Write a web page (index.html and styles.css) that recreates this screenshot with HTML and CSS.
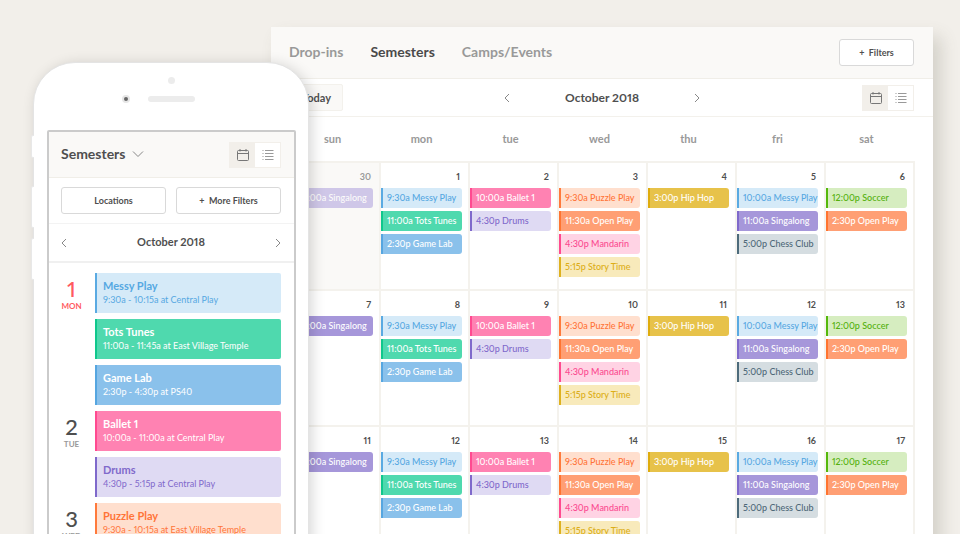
FILE: index.html
```html
<!DOCTYPE html>
<html lang="en">
<head>
  <meta charset="UTF-8" />
  <meta name="viewport" content="width=device-width, initial-scale=1" />
  <title>Semesters</title>
  <link rel="stylesheet" href="styles.css">
</head>
<body>
  <!-- Shared icons -->
  <svg class="sprite" aria-hidden="true">
    <symbol id="icon-calendar" viewBox="0 0 14 14">
      <rect x="1.5" y="2.5" width="11" height="10" rx="1" />
      <path d="M1.5 5.5h11M4 1v2.5M10 1v2.5" />
    </symbol>
    <symbol id="icon-list" viewBox="0 0 14 14">
      <path d="M4 2.5h8.500M4 5.500h8.500M4 8.500h8.500M4 11.500h8.500M1.500 2.500h1M1.500 5.500h1M1.500 8.500h1M1.500 11.500h1" />
    </symbol>
    <symbol id="icon-prev" viewBox="0 0 6 10"><path d="M5 1L1 5l4 4" /></symbol>
    <symbol id="icon-next" viewBox="0 0 6 10"><path d="M1 1l4 4-4 4" /></symbol>
    <symbol id="icon-down" viewBox="0 0 12 8"><path d="M1 1.500l5 5 5-5" /></symbol>
  </svg>

  <!-- Desktop calendar -->
  <main class="desktop">
    <header class="desktop-header">
      <nav class="tabs">
        <a href="#">Drop-ins</a>
        <a href="#" class="active">Semesters</a>
        <a href="#">Camps/Events</a>
      </nav>
      <button type="button" class="btn">+&nbsp; Filters</button>
    </header>

    <div class="toolbar">
      <button type="button" class="today">Today</button>
      <div class="month">
        <button type="button" class="arrow" aria-label="Previous month"><svg><use href="#icon-prev" /></svg></button>
        <h2>October 2018</h2>
        <button type="button" class="arrow" aria-label="Next month"><svg><use href="#icon-next" /></svg></button>
      </div>
      <div class="toggle">
        <button type="button" class="on" aria-label="Calendar view"><svg><use href="#icon-calendar" /></svg></button>
        <button type="button" aria-label="List view"><svg><use href="#icon-list" /></svg></button>
      </div>
    </div>

    <table class="calendar">
      <thead>
        <tr><th>sun</th><th>mon</th><th>tue</th><th>wed</th><th>thu</th><th>fri</th><th>sat</th></tr>
      </thead>
      <tbody>
        <tr class="first-week">
          <td class="past">
            <div class="date">30</div>
            <div class="event violet">10:00a Singalong</div>
          </td>
          <td>
            <div class="date">1</div>
            <div class="event sky">9:30a Messy Play</div>
            <div class="event green">11:00a Tots Tunes</div>
            <div class="event blue">2:30p Game Lab</div>
          </td>
          <td>
            <div class="date">2</div>
            <div class="event pink">10:00a Ballet 1</div>
            <div class="event lilac">4:30p Drums</div>
          </td>
          <td>
            <div class="date">3</div>
            <div class="event peach">9:30a Puzzle Play</div>
            <div class="event orange">11:30a Open Play</div>
            <div class="event rose">4:30p Mandarin</div>
            <div class="event cream">5:15p Story Time</div>
          </td>
          <td>
            <div class="date">4</div>
            <div class="event gold">3:00p Hip Hop</div>
          </td>
          <td>
            <div class="date">5</div>
            <div class="event sky">10:00a Messy Play</div>
            <div class="event violet">11:00a Singalong</div>
            <div class="event slate">5:00p Chess Club</div>
          </td>
          <td>
            <div class="date">6</div>
            <div class="event lime">12:00p Soccer</div>
            <div class="event orange">2:30p Open Play</div>
          </td>
        </tr>
        <tr>
          <td>
            <div class="date">7</div>
            <div class="event violet">10:00a Singalong</div>
          </td>
          <td>
            <div class="date">8</div>
            <div class="event sky">9:30a Messy Play</div>
            <div class="event green">11:00a Tots Tunes</div>
            <div class="event blue">2:30p Game Lab</div>
          </td>
          <td>
            <div class="date">9</div>
            <div class="event pink">10:00a Ballet 1</div>
            <div class="event lilac">4:30p Drums</div>
          </td>
          <td>
            <div class="date">10</div>
            <div class="event peach">9:30a Puzzle Play</div>
            <div class="event orange">11:30a Open Play</div>
            <div class="event rose">4:30p Mandarin</div>
            <div class="event cream">5:15p Story Time</div>
          </td>
          <td>
            <div class="date">11</div>
            <div class="event gold">3:00p Hip Hop</div>
          </td>
          <td>
            <div class="date">12</div>
            <div class="event sky">10:00a Messy Play</div>
            <div class="event violet">11:00a Singalong</div>
            <div class="event slate">5:00p Chess Club</div>
          </td>
          <td>
            <div class="date">13</div>
            <div class="event lime">12:00p Soccer</div>
            <div class="event orange">2:30p Open Play</div>
          </td>
        </tr>
        <tr>
          <td>
            <div class="date">11</div>
            <div class="event violet">10:00a Singalong</div>
          </td>
          <td>
            <div class="date">12</div>
            <div class="event sky">9:30a Messy Play</div>
            <div class="event green">11:00a Tots Tunes</div>
            <div class="event blue">2:30p Game Lab</div>
          </td>
          <td>
            <div class="date">13</div>
            <div class="event pink">10:00a Ballet 1</div>
            <div class="event lilac">4:30p Drums</div>
          </td>
          <td>
            <div class="date">14</div>
            <div class="event peach">9:30a Puzzle Play</div>
            <div class="event orange">11:30a Open Play</div>
            <div class="event rose">4:30p Mandarin</div>
            <div class="event cream">5:15p Story Time</div>
          </td>
          <td>
            <div class="date">15</div>
            <div class="event gold">3:00p Hip Hop</div>
          </td>
          <td>
            <div class="date">16</div>
            <div class="event sky">10:00a Messy Play</div>
            <div class="event violet">11:00a Singalong</div>
            <div class="event slate">5:00p Chess Club</div>
          </td>
          <td>
            <div class="date">17</div>
            <div class="event lime">12:00p Soccer</div>
            <div class="event orange">2:30p Open Play</div>
          </td>
        </tr>
      </tbody>
    </table>
  </main>

  <!-- Phone, lies over the desktop calendar -->
  <section class="phone">
    <span class="side-key mute"></span>
    <span class="side-key vol-up"></span>
    <span class="side-key vol-down"></span>
    <div class="phone-top">
      <span class="sensor"></span>
      <div class="speaker-row">
        <span class="camera"></span>
        <span class="speaker"></span>
      </div>
    </div>

    <div class="screen">
      <header class="screen-header">
        <button type="button" class="title">Semesters <svg><use href="#icon-down" /></svg></button>
        <div class="toggle">
          <button type="button" class="on" aria-label="Calendar view"><svg><use href="#icon-calendar" /></svg></button>
          <button type="button" aria-label="List view"><svg><use href="#icon-list" /></svg></button>
        </div>
      </header>
      <div class="filters">
        <button type="button" class="btn">Locations</button>
        <button type="button" class="btn">+&nbsp; More Filters</button>
      </div>
      <div class="screen-month">
        <button type="button" class="arrow" aria-label="Previous month"><svg><use href="#icon-prev" /></svg></button>
        <h2>October 2018</h2>
        <button type="button" class="arrow" aria-label="Next month"><svg><use href="#icon-next" /></svg></button>
      </div>

      <div class="agenda">
        <div class="day today-day">
          <div class="day-label"><b>1</b><span>MON</span></div>
          <div class="day-events">
            <div class="card sky"><h3>Messy Play</h3><p>9:30a - 10:15a at Central Play</p></div>
            <div class="card green"><h3>Tots Tunes</h3><p>11:00a - 11:45a at East Village Temple</p></div>
            <div class="card blue"><h3>Game Lab</h3><p>2:30p - 4:30p at PS40</p></div>
          </div>
        </div>
        <div class="day">
          <div class="day-label"><b>2</b><span>TUE</span></div>
          <div class="day-events">
            <div class="card pink"><h3>Ballet 1</h3><p>10:00a - 11:00a at Central Play</p></div>
            <div class="card lilac"><h3>Drums</h3><p>4:30p - 5:15p at Central Play</p></div>
          </div>
        </div>
        <div class="day">
          <div class="day-label"><b>3</b><span>WED</span></div>
          <div class="day-events">
            <div class="card peach"><h3>Puzzle Play</h3><p>9:30a - 10:15a at East Village Temple</p></div>
          </div>
        </div>
      </div>
    </div>
  </section>
</body>
</html>
```
FILE: styles.css
```css
* {
  margin: 0;
  padding: 0;
  box-sizing: border-box;
}
body {
  position: relative;
  height: 100vh;
  overflow: hidden;
  padding: 27px 27px 0 271px;
  background: #f2efea;
  color: #4f4f4f;
  font-family: Lato, "Open Sans", sans-serif;
  font-size: 10px;
  font-variant-numeric: proportional-nums;
}
button {
  font: inherit;
  color: inherit;
  background: none;
  border: none;
  cursor: pointer;
}
svg {
  display: block;
  fill: none;
  stroke: currentColor;
}
.sprite {
  position: absolute;
  width: 0;
  height: 0;
}
h2 {
  font-size: 12px;
  font-weight: bold;
}

/* Desktop panel */
.desktop {
  background: #fff;
  box-shadow: 8px 10px 16px rgba(90, 90, 70, 0.2);
}
.desktop-header {
  display: flex;
  justify-content: space-between;
  align-items: center;
  height: 52px;
  padding: 0 19px 0 18px;
  background: #faf9f7;
  border-bottom: 1px solid #f0eee8;
}
.tabs {
  display: flex;
  gap: 27px;
  padding-bottom: 2px;
}
.tabs a {
  color: #999;
  font-size: 14px;
  font-weight: bold;
  text-decoration: none;
}
.tabs a.active {
  color: #4a4a4a;
}
.btn {
  height: 27px;
  border: 1px solid #d9d9d9;
  border-radius: 3px;
  background: #fff;
  font-size: 9px;
  font-weight: bold;
}
.desktop-header .btn {
  width: 75px;
}
.toolbar {
  display: grid;
  grid-template-columns: 1fr auto 1fr;
  align-items: center;
  height: 38px;
  padding: 0 19px;
  border-bottom: 1px solid #f3f1ec;
}
.today {
  justify-self: start;
  width: 53px;
  height: 27px;
  border: 1px solid #f3f1ec;
  border-radius: 2px;
  background: #faf9f7;
  font-size: 11px;
  font-weight: bold;
}
.month {
  display: flex;
  align-items: center;
  justify-content: space-between;
  width: 196px;
}
.arrow {
  color: #888;
}
.arrow svg {
  width: 6px;
  height: 10px;
}
.toggle {
  display: flex;
  justify-self: end;
  border: 1px solid #f2efea;
}
.toggle button {
  display: grid;
  place-items: center;
  width: 25px;
  height: 24px;
  background: #fff;
  color: #999;
}
.toggle button.on {
  background: #f2efea;
  color: #777;
}
.toggle svg {
  width: 14px;
  height: 14px;
}

/* Month grid */
.calendar {
  width: calc(100% - 39px);
  margin-left: 19px;
  table-layout: fixed;
  border-spacing: 0;
}
.calendar th {
  height: 44px;
  padding: 0 4px 2px 0;
  color: #999;
  font-size: 11px;
  font-weight: bold;
}
.calendar td {
  height: 136px;
  padding-right: 6px;
  border-top: 2px solid #f4f2ed;
  border-left: 2px solid #f4f2ed;
  vertical-align: top;
}
.calendar .first-week td {
  height: 128px;
}
/* right edge of the grid, kept out of the column width */
.calendar td:last-child {
  box-shadow: 2px 0 0 #f4f2ed;
}
.calendar td.past {
  background: #faf9f7;
}
.date {
  padding: 6px 2px 4px 0;
  font-size: 9px;
  font-weight: bold;
  line-height: 15px;
  text-align: right;
}
.past .date {
  color: #999;
}
.past .event {
  opacity: 0.5;
}
.event {
  height: 20px;
  margin-bottom: 3px;
  padding-left: 4px;
  border-left: 2px solid;
  border-radius: 0 3px 3px 0;
  font-size: 9px;
  font-weight: 500;
  line-height: 19px;
  white-space: nowrap;
}

/* Phone */
.phone {
  position: absolute;
  top: 62px;
  left: 33px;
  width: 276px;
  height: 600px;
  padding: 0 12px 0 13px;
  border: 1px solid #e4e4e4;
  border-radius: 42px;
  background: #fff;
  box-shadow: 3px 2px 14px rgba(0, 0, 0, 0.16);
}
.side-key {
  position: absolute;
  left: -3px;
  width: 3px;
  height: 42px;
  border: 1px solid #e8e8e8;
  border-right: none;
  border-radius: 2px 0 0 2px;
  background: #fff;
}
.mute { top: 72px; height: 23px; }
.vol-up { top: 123px; }
.vol-down { top: 175px; }
.phone-top {
  height: 67px;
  padding-top: 14px;
}
.sensor {
  display: block;
  width: 7px;
  height: 7px;
  margin: 0 auto;
  border-radius: 50%;
  background: #ececec;
}
.speaker-row {
  display: grid;
  grid-template-columns: 1fr 47px 1fr;
  align-items: center;
  margin-top: 11px;
}
.camera {
  justify-self: end;
  width: 8px;
  height: 8px;
  margin-right: 18px;
  border: 2px solid #e6e6e6;
  border-radius: 50%;
  background: #666;
}
.speaker {
  height: 6px;
  border-radius: 3px;
  background: #ececec;
}
.screen {
  border: 2px solid #cbcbcb;
  border-radius: 2px;
}
.screen-header {
  display: flex;
  justify-content: space-between;
  align-items: center;
  height: 46px;
  padding: 0 13px 0 12px;
  background: #faf9f7;
  border-bottom: 1px solid #f0eee8;
}
.title {
  display: flex;
  align-items: center;
  gap: 7px;
  padding-bottom: 2px;
  font-size: 14px;
  font-weight: bold;
}
.title svg {
  width: 12px;
  height: 8px;
  color: #888;
}
.filters {
  display: grid;
  grid-template-columns: 1fr 1fr;
  gap: 10px;
  padding: 9px 13px 9px 12px;
  border-bottom: 1px solid #f3f3f3;
}
.screen-month {
  display: flex;
  justify-content: space-between;
  align-items: center;
  height: 39px;
  padding: 0 13px 0 12px;
  border-bottom: 2px solid #f0f0f0;
}
.screen-month h2 {
  padding-bottom: 2px;
  font-size: 11px;
}
.agenda {
  padding: 10px 13px 0 0;
}
.day {
  display: grid;
  grid-template-columns: 46px 1fr;
}
.day-label {
  display: flex;
  flex-direction: column;
  align-items: center;
  padding: 4px 1px 0 0;
}
.day-label b {
  font-size: 22px;
  font-weight: 500;
  line-height: 24px;
}
.day-label span {
  color: #999;
  font-size: 8px;
  font-weight: bold;
  line-height: 10px;
}
.today-day b,
.today-day span {
  color: #ff5a5f;
}
.card {
  height: 40px;
  margin-bottom: 6px;
  padding: 6px 0 0 6px;
  border-left: 2px solid;
  border-radius: 0 2px 2px 0;
  white-space: nowrap;
}
.card h3 {
  font-size: 11px;
  line-height: 14px;
}
.card p {
  font-size: 9px;
  line-height: 13px;
}

/* Event colours, used by the grid and the phone list */
.sky { background: #d5eaf8; border-color: #5aaae2; color: #55a8e2; }
.green { background: #4fd9ae; border-color: #0fc78c; color: #fff; }
.blue { background: #8ac1eb; border-color: #56a6e0; color: #fff; }
.pink { background: #ff82b2; border-color: #ff4a90; color: #fff; }
.lilac { background: #dfdaf3; border-color: #7f69cb; color: #7f69cb; }
.peach { background: #ffdfce; border-color: #ff7a3c; color: #ff7438; }
.orange { background: #ff9f74; border-color: #ff7430; color: #fff; }
.rose { background: #ffd3e4; border-color: #ff4a90; color: #fb4a90; }
.cream { background: #f8eabb; border-color: #deb11f; color: #dcae18; }
.gold { background: #e7c24a; border-color: #dfac0d; color: #fff; }
.violet { background: #a697da; border-color: #7f69cb; color: #fff; }
.slate { background: #d5dde1; border-color: #4d6b7b; color: #4d6878; }
.lime { background: #d6edc0; border-color: #55b80b; color: #53b00c; }
```
